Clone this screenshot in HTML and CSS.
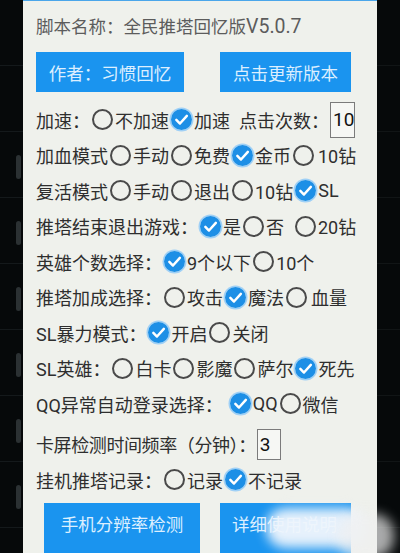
FILE: index.html
```html
<!DOCTYPE html>
<html>
<head>
<meta charset="utf-8">
<link rel="stylesheet" href="styles.css">
</head>
<body>
<div class="screen">
  <div class="side side-left">
    <div class="slot"></div><div class="slot"></div><div class="slot"><i class="bar"></i></div><div class="slot"><i class="bar"></i></div><div class="slot"><i class="bar"></i></div><div class="slot"><i class="bar"></i></div><div class="slot"><i class="bar"></i></div><div class="slot"><i class="bar"></i></div><div class="slot"></div>
  </div>
  <div class="panel">
    <div class="title">脚本名称：全民推塔回忆版<span class="lat">V5.0.7</span></div>
    <div class="btns top">
      <div class="btn b1">作者：习惯回忆</div>
      <div class="btn b2">点击更新版本</div>
    </div>
    <div class="row">加速：<span class="rb"></span>不加速<span class="rb on"><svg viewBox="0 0 22 22"><circle cx="11" cy="11" r="11" fill="#1d8fe6"/><path d="M5.6 11.4 L9.4 15.2 L16.6 7.2" stroke="#fff" stroke-width="2.6" fill="none" stroke-linecap="round" stroke-linejoin="round"/></svg></span>加速<span class="sp"></span>点击次数：<span class="inp">10<i class="caret"></i></span></div>
    <div class="row">加血模式<span class="rb"></span>手动<span class="rb"></span>免费<span class="rb on"><svg viewBox="0 0 22 22"><circle cx="11" cy="11" r="11" fill="#1d8fe6"/><path d="M5.6 11.4 L9.4 15.2 L16.6 7.2" stroke="#fff" stroke-width="2.6" fill="none" stroke-linecap="round" stroke-linejoin="round"/></svg></span>金币<span class="rb"></span><span class="sp-s"></span>10钻</div>
    <div class="row">复活模式<span class="rb"></span>手动<span class="rb"></span>退出<span class="rb"></span>10钻<span class="rb on"><svg viewBox="0 0 22 22"><circle cx="11" cy="11" r="11" fill="#1d8fe6"/><path d="M5.6 11.4 L9.4 15.2 L16.6 7.2" stroke="#fff" stroke-width="2.6" fill="none" stroke-linecap="round" stroke-linejoin="round"/></svg></span>SL</div>
    <div class="row">推塔结束退出游戏：<span class="rb on"><svg viewBox="0 0 22 22"><circle cx="11" cy="11" r="11" fill="#1d8fe6"/><path d="M5.6 11.4 L9.4 15.2 L16.6 7.2" stroke="#fff" stroke-width="2.6" fill="none" stroke-linecap="round" stroke-linejoin="round"/></svg></span>是<span class="rb"></span>否<span class="sp"></span><span class="rb"></span>20钻</div>
    <div class="row">英雄个数选择：<span class="rb on"><svg viewBox="0 0 22 22"><circle cx="11" cy="11" r="11" fill="#1d8fe6"/><path d="M5.6 11.4 L9.4 15.2 L16.6 7.2" stroke="#fff" stroke-width="2.6" fill="none" stroke-linecap="round" stroke-linejoin="round"/></svg></span>9个以下<span class="rb"></span>10个</div>
    <div class="row">推塔加成选择：<span class="rb"></span>攻击<span class="rb on"><svg viewBox="0 0 22 22"><circle cx="11" cy="11" r="11" fill="#1d8fe6"/><path d="M5.6 11.4 L9.4 15.2 L16.6 7.2" stroke="#fff" stroke-width="2.6" fill="none" stroke-linecap="round" stroke-linejoin="round"/></svg></span>魔法<span class="rb"></span><span class="sp-s"></span>血量</div>
    <div class="row">SL暴力模式：<span class="rb on"><svg viewBox="0 0 22 22"><circle cx="11" cy="11" r="11" fill="#1d8fe6"/><path d="M5.6 11.4 L9.4 15.2 L16.6 7.2" stroke="#fff" stroke-width="2.6" fill="none" stroke-linecap="round" stroke-linejoin="round"/></svg></span>开启<span class="rb"></span>关闭</div>
    <div class="row">SL英雄：<span class="rb"></span>白卡<span class="rb"></span>影魔<span class="rb"></span>萨尔<span class="rb on"><svg viewBox="0 0 22 22"><circle cx="11" cy="11" r="11" fill="#1d8fe6"/><path d="M5.6 11.4 L9.4 15.2 L16.6 7.2" stroke="#fff" stroke-width="2.6" fill="none" stroke-linecap="round" stroke-linejoin="round"/></svg></span>死先</div>
    <div class="row">QQ异常自动登录选择：<span class="sp-m"></span><span class="rb on"><svg viewBox="0 0 22 22"><circle cx="11" cy="11" r="11" fill="#1d8fe6"/><path d="M5.6 11.4 L9.4 15.2 L16.6 7.2" stroke="#fff" stroke-width="2.6" fill="none" stroke-linecap="round" stroke-linejoin="round"/></svg></span>QQ<span class="rb"></span>微信</div>
    <div class="row tall"><span class="tight">卡屏检测时间频率（分钟）：</span><span class="inp inp3">3</span></div>
    <div class="row">挂机推塔记录：<span class="rb"></span>记录<span class="rb on"><svg viewBox="0 0 22 22"><circle cx="11" cy="11" r="11" fill="#1d8fe6"/><path d="M5.6 11.4 L9.4 15.2 L16.6 7.2" stroke="#fff" stroke-width="2.6" fill="none" stroke-linecap="round" stroke-linejoin="round"/></svg></span>不记录</div>
    <div class="btns bottom">
      <div class="btn b3">手机分辨率检测</div>
      <div class="btn b4">详细使用说明</div>
    </div>
  </div>
  <div class="side side-right">
    <div class="slot"></div><div class="slot"></div><div class="slot"></div><div class="slot"></div><div class="slot"></div><div class="slot"></div><div class="slot"></div><div class="slot"></div><div class="slot"></div>
  </div>
  <div class="watermark"></div>
  <div class="watermark wm2"></div>
</div>
</body>
</html>
```

FILE: styles.css
```css
html, body {
  margin: 0;
  padding: 0;
  background: #07090a;
}
.screen {
  position: relative;
  width: 400px;
  height: 553px;
  overflow: hidden;
  display: flex;
  font-family: Roboto, "Noto Sans CJK SC", sans-serif;
}
.side {
  width: 23px;
  flex: none;
  display: flex;
  flex-direction: column;
  background: #06090a;
}
.slot {
  height: 66px;
  flex: none;
  border-bottom: 1px solid #14191b;
  display: flex;
  align-items: flex-end;
  justify-content: flex-end;
  padding-bottom: 18px;
  box-sizing: border-box;
}
.bar {
  display: block;
  width: 5px;
  height: 24px;
  border-radius: 3px;
  background: #2b3133;
  margin-right: 2px;
}
.side-right .slot {
  border-bottom-color: #111516;
}
.panel {
  width: 354px;
  flex: none;
  background: #eff1ec;
  border-top: 1px solid #4aa6ea;
  box-sizing: border-box;
  padding: 14px 0 0 13px;
  color: #2e2e2e;
  font-size: 18px;
}
.title {
  height: 24px;
  line-height: 24px;
  font-size: 17.5px;
  color: #5c5c5c;
  white-space: nowrap;
}
.title .lat {
  font-size: 19.5px;
}
.btns {
  display: flex;
}
.btns.top {
  margin-top: 13px;
  gap: 36px;
}
.btn {
  height: 40px;
  background: #1a94ef;
  color: #dcefff;
  font-size: 17.5px;
  display: flex;
  align-items: center;
  justify-content: center;
  white-space: nowrap;
}
.b1 { width: 148px; }
.b2 { width: 131px; }
.btns.bottom {
  margin-top: 5px;
  margin-left: 8px;
  gap: 20px;
}
.b3 { width: 156px; height: 56px; align-items: flex-start; padding-top: 8px; box-sizing: border-box; }
.b4 { width: 131px; height: 56px; align-items: flex-start; justify-content: flex-start; padding: 8px 0 0 12px; box-sizing: border-box; }
.row {
  height: 35.5px;
  display: flex;
  align-items: center;
  white-space: nowrap;
}
.btns.top + .row { margin-top: 10px; }
.row.tall { margin-top: 5px; }
.tight { letter-spacing: -0.4px; }
.rb {
  width: 21px;
  height: 21px;
  box-sizing: border-box;
  border: 2px solid #4a4a4a;
  border-radius: 50%;
  margin: 0 2px;
  flex: none;
}
.rb.on {
  border: none;
  box-shadow: 0 0 0 1.5px #9fd0f6;
}
.rb.on svg {
  display: block;
  width: 21px;
  height: 21px;
}
.sp { width: 9px; flex: none; }
.sp-s { width: 2px; flex: none; }
.sp-m { width: 5px; flex: none; }
.inp {
  width: 25px;
  height: 36px;
  box-sizing: border-box;
  border: 1px solid #7b7b7b;
  background: #f6f7f4;
  font-size: 19px;
  color: #111;
  display: flex;
  align-items: center;
  padding-left: 2px;
  margin-left: 1px;
}
.caret {
  display: block;
  width: 1.5px;
  height: 22px;
  background: #222;
}
.inp3 {
  width: 24px;
  height: 31px;
}
.watermark {
  position: absolute;
  left: 266px;
  top: 508px;
  width: 100px;
  height: 40px;
  border-radius: 20px;
  background: rgba(238,245,252,0.96);
  filter: blur(6px);
}
.wm2 {
  left: 338px;
  top: 514px;
  width: 56px;
  height: 44px;
  background: rgba(240,240,240,0.7);
  filter: blur(6px);
}
```
